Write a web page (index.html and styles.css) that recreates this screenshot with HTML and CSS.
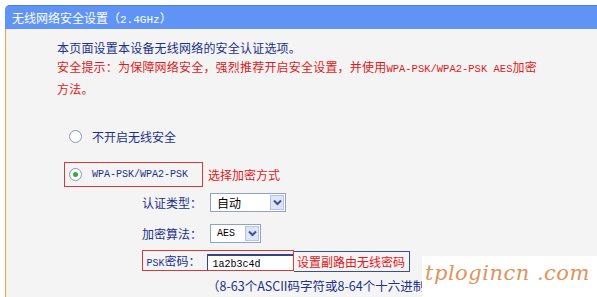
FILE: index.html
```html
<!DOCTYPE html>
<html lang="zh-CN">
<head>
    <meta charset="UTF-8">
    <title>无线网络安全设置</title>
    <link rel="stylesheet" href="styles.css">
</head>
<body>
    <div class="page">
        <div class="head">无线网络安全设置（<span class="mono">2.4GHz</span>）</div>
        <div class="panel">
            <div class="intro">
                <p class="blue">本页面设置本设备无线网络的安全认证选项。</p>
                <p class="red">安全提示：为保障网络安全，强烈推荐开启安全设置，并使用<span class="mono">WPA-PSK/WPA2-PSK AES</span>加密</p>
                <p class="red">方法。</p>
            </div>

            <div class="radio-row">
                <span class="radio"></span>
                <span class="blue">不开启无线安全</span>
            </div>

            <div class="wpa-row">
                <div class="mark-box">
                    <span class="radio checked"></span>
                    <span class="mono blue">WPA-PSK/WPA2-PSK</span>
                </div>
                <span class="red note">选择加密方式</span>
            </div>

            <div class="field">
                <span class="label">认证类型：</span>
                <div class="select wide">
                    <span class="value">自动</span>
                    <span class="drop">
                        <svg width="9" height="7" viewBox="0 0 9 7"><polyline points="1,1.5 4.5,5 8,1.5" fill="none" stroke="#3e5587" stroke-width="2"/></svg>
                    </span>
                </div>
            </div>

            <div class="field">
                <span class="label">加密算法：</span>
                <div class="select narrow">
                    <span class="value mono">AES</span>
                    <span class="drop">
                        <svg width="9" height="7" viewBox="0 0 9 7"><polyline points="1,1.5 4.5,5 8,1.5" fill="none" stroke="#3e5587" stroke-width="2"/></svg>
                    </span>
                </div>
            </div>

            <div class="psk-row">
                <div class="psk-box">
                    <span class="label psk-label"><span class="mono">PSK</span>密码：</span>
                    <div class="input mono">1a2b3c4d</div>
                </div>
                <span class="red note-box">设置副路由无线密码</span>
            </div>

            <p class="blue help">（8-63个ASCII码字符或8-64个十六进制</p>
        </div>
        <div class="watermark">tplogincn .com</div>
    </div>
</body>
</html>
```

FILE: styles.css
```css
body {
    margin: 0;
    background-color: #ffffff;
    font-family: "Noto Sans CJK SC", "Liberation Sans", sans-serif;
    font-size: 12px;
    overflow: hidden;
}
p {
    margin: 0;
}
.page {
    position: relative;
    height: 297px;
    padding: 5px 0 0 5px;
    box-sizing: border-box;
}
.mono {
    font-family: "Liberation Mono", monospace;
    font-size: 10px;
}
.blue {
    color: #1b3286;
}
.red {
    color: #e0191c;
}
.head {
    height: 23px;
    line-height: 23px;
    background-color: #5f94f6;
    border-top: 1px solid #4f7ed6;
    border-radius: 5px 0 0 0;
    color: #ffffff;
    font-size: 12px;
    padding-left: 7px;
}
.head .mono {
    font-size: 11px;
}
.panel {
    height: 268px;
    background-color: #f4f4f4;
    border-left: 1px solid #e9a56b;
    box-shadow: inset 1px 0 #fcebd2;
    padding-left: 51px;
}
.intro {
    padding-top: 9px;
    line-height: 19px;
    letter-spacing: 0.2px;
}
.intro .mono {
    font-size: 10.5px;
    letter-spacing: 0;
}
.radio-row {
    display: flex;
    align-items: center;
    gap: 10px;
    height: 20px;
    margin: 28px 0 0 12px;
}
.radio {
    width: 11px;
    height: 11px;
    border: 1px solid #8596b5;
    border-radius: 50%;
    background-color: #ffffff;
    display: flex;
    justify-content: center;
    align-items: center;
}
.radio.checked::after {
    content: "";
    width: 5px;
    height: 5px;
    border-radius: 50%;
    background-color: #3aa83a;
}
.wpa-row {
    display: flex;
    align-items: center;
    margin: 16px 0 0 7px;
    height: 25px;
}
.mark-box {
    display: flex;
    align-items: center;
    gap: 10px;
    height: 23px;
    width: 133px;
    padding-left: 4px;
    border: 1px solid #d8373b;
}
.note {
    margin-left: 5px;
}
.field {
    display: grid;
    grid-template-columns: 145px auto;
    column-gap: 8px;
    align-items: center;
    height: 19px;
    margin-top: 6px;
}
.field + .field {
    margin-top: 12px;
}
.label {
    text-align: right;
    color: #1b3286;
}
.select {
    display: flex;
    align-items: center;
    justify-content: space-between;
    height: 17px;
    background-color: #ffffff;
    border: 1px solid #8ea3c6;
    color: #000000;
}
.select.wide {
    width: 74px;
}
.select.narrow {
    width: 49px;
}
.value {
    padding-left: 6px;
}
.drop {
    width: 14px;
    height: 15px;
    margin-right: 1px;
    background-color: #dce6f8;
    border: 1px solid #b4c5e6;
    box-sizing: border-box;
    display: flex;
    justify-content: center;
    align-items: center;
}
.psk-row {
    display: flex;
    margin: 7px 0 0 85px;
    height: 21px;
}
.psk-box {
    display: flex;
    align-items: flex-end;
    border: 1px solid #d8373b;
    width: 152px;
    box-sizing: border-box;
}
.psk-label {
    width: 58px;
    align-self: center;
}
.input {
    width: 87px;
    height: 16px;
    margin-left: 6px;
    padding-left: 5px;
    line-height: 17px;
    background-color: #ffffff;
    border-top: 2px solid #34448a;
    border-left: 1px solid #34448a;
    box-sizing: border-box;
    color: #000000;
}
.note-box {
    display: flex;
    align-items: center;
    padding: 0 4px 0 3px;
    height: 19px;
    margin-top: 1px;
    border: 1px solid #3a4f8f;
    border-left: none;
}
.help {
    margin: 5px 0 0 150px;
    line-height: 19px;
    font-size: 12.5px;
    white-space: nowrap;
}
.watermark {
    position: absolute;
    left: 422px;
    top: 256px;
    right: 0;
    bottom: 0;
    background-color: #ffffff;
    color: #e2935a;
    font-family: "DejaVu Serif", serif;
    font-style: italic;
    font-size: 21px;
    letter-spacing: 0.5px;
    line-height: 34px;
    padding-left: 3px;
    white-space: nowrap;
    overflow: hidden;
}
```
